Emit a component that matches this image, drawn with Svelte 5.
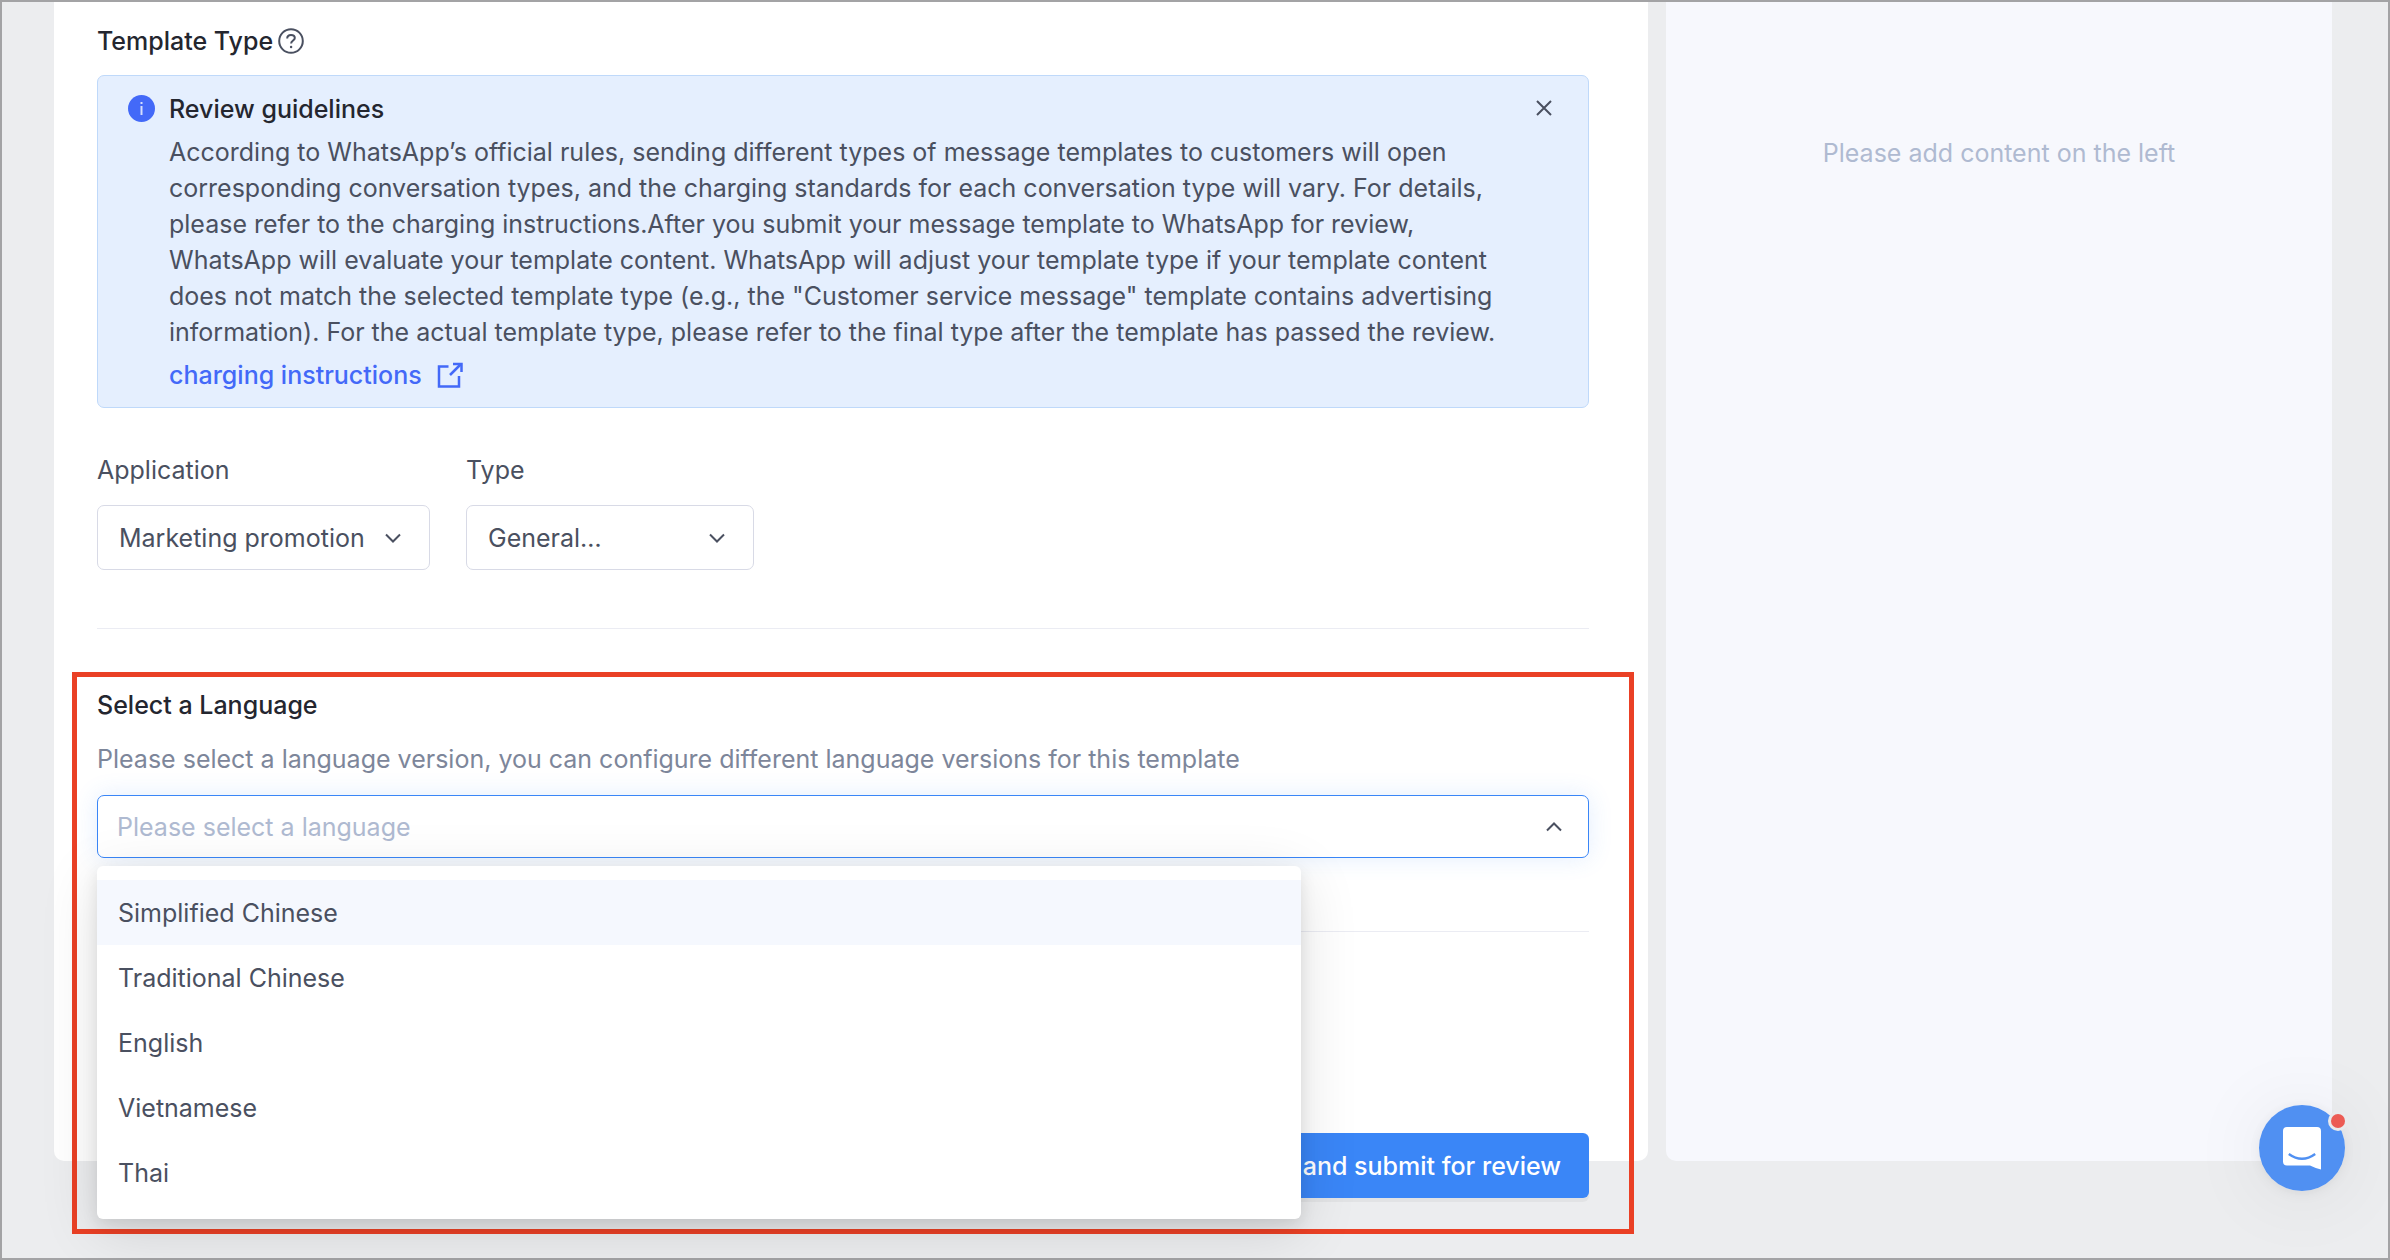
<script>
  const applications = ['Marketing promotion', 'Customer service message'];
  const types = ['General…', 'Catalog'];
  const languages = ['Simplified Chinese', 'Traditional Chinese', 'English', 'Vietnamese', 'Thai'];

  let application = $state(applications[0]);
  let type = $state(types[0]);
  let language = $state('');
  let active = $state(0);
  let open = $state(true);
  let showGuidelines = $state(true);

  function choose(name) {
    language = name;
    open = false;
  }
</script>

{#snippet chevron(up)}
  <svg class="chevron" class:up viewBox="0 0 18 18" aria-hidden="true">
    <path d="M2 5.5 L9 12.5 L16 5.5" />
  </svg>
{/snippet}

<div class="page">
  <main class="card">
    <section>
      <h2 class="heading">
        Template Type
        <svg class="help" viewBox="0 0 26 26" role="img" aria-label="Help">
          <circle cx="13" cy="13" r="11.8" />
          <path d="M9.2 10.4 C9.2 8.2 10.8 6.9 13 6.9 C15.2 6.9 16.8 8.2 16.8 10.1 C16.8 12.5 13.1 12.7 13.1 15.6" />
          <circle class="dot" cx="13.1" cy="19" r="1.2" />
        </svg>
      </h2>

      {#if showGuidelines}
        <div class="alert" role="note">
          <svg class="info" viewBox="0 0 27 27" aria-hidden="true">
            <circle cx="13.5" cy="13.5" r="13.5" />
            <path d="M13.5 11 V20" />
            <path d="M13.5 7 V9" />
          </svg>
          <div class="alert-body">
            <h3 class="heading">Review guidelines</h3>
            <p>
              According to WhatsApp’s official rules, sending different types of message templates to
              customers will open corresponding conversation types, and the charging standards for each
              conversation type will vary. For details, please refer to the charging instructions.After
              you submit your message template to WhatsApp for review, WhatsApp will evaluate your
              template content. WhatsApp will adjust your template type if your template content does
              not match the selected template type (e.g., the "Customer service message" template
              contains advertising information). For the actual template type, please refer to the
              final type after the template has passed the review.
            </p>
            <a class="more" href="#charging">
              charging instructions
              <svg viewBox="0 0 26 26" aria-hidden="true">
                <path d="M11.5 4.5 H2 V24.5 H22 V14" />
                <path d="M13 13 L24 2" />
                <path d="M16 2 H24.5 V10" />
              </svg>
            </a>
          </div>
          <button class="close" aria-label="Close" onclick={() => (showGuidelines = false)}>
            <svg viewBox="0 0 16 16" aria-hidden="true"><path d="M1 1 L15 15 M15 1 L1 15" /></svg>
          </button>
        </div>
      {/if}

      <div class="fields">
        <div class="field">
          <label for="application">Application</label>
          <div class="select">
            <select id="application" bind:value={application}>
              {#each applications as name}<option>{name}</option>{/each}
            </select>
            {@render chevron(false)}
          </div>
        </div>
        <div class="field narrow">
          <label for="type">Type</label>
          <div class="select">
            <select id="type" bind:value={type}>
              {#each types as name}<option>{name}</option>{/each}
            </select>
            {@render chevron(false)}
          </div>
        </div>
      </div>
    </section>

    <hr />

    <section class="highlight">
      <h2 class="heading"><label for="language">Select a Language</label></h2>
      <p class="hint" id="language-hint">
        Please select a language version, you can configure different language versions for this template
      </p>
      <div class="combo">
        <input
          id="language"
          role="combobox"
          readonly
          placeholder="Please select a language"
          value={language}
          aria-expanded={open}
          aria-controls="languages"
          aria-describedby="language-hint"
          onclick={() => (open = !open)}
        />
        {@render chevron(open)}
        {#if open}
          <ul id="languages" role="listbox" aria-label="Language">
            {#each languages as name, i}
              <li role="presentation">
                <button
                  role="option"
                  aria-selected={name === language}
                  class:active={i === active}
                  onmouseenter={() => (active = i)}
                  onclick={() => choose(name)}>{name}</button
                >
              </li>
            {/each}
          </ul>
        {/if}
      </div>
      <hr />
      <div class="actions">
        <button class="submit">Save and submit for review</button>
      </div>
    </section>
  </main>

  <aside class="preview">
    <p>Please add content on the left</p>
  </aside>

  <div class="chat">
    <button aria-label="Open chat">
      <svg viewBox="0 0 40 44" aria-hidden="true">
        <path
          class="bubble"
          d="M5 1 H35 Q39 1 39 5 V43.5 Q34 42.5 28 39.5 H5 Q1 39.5 1 35.5 V5 Q1 1 5 1 Z"
        />
        <path class="smile" d="M6.8 28 Q20 37.5 33.2 28" />
      </svg>
    </button>
    <span class="badge"></span>
  </div>
</div>

<style>
  :global(body) {
    margin: 0;
  }
  .page {
    box-sizing: border-box;
    position: relative;
    display: grid;
    grid-template-columns: 1594fr 666fr;
    align-items: stretch;
    gap: 18px;
    min-height: 100vh;
    padding: 0 56px 97px 52px;
    border: 2px solid #a3a3a5;
    background: #ecedef;
    font-family: Inter, 'Liberation Sans', sans-serif;
    font-size: 25px;
    line-height: 36px;
    color: #4a5060;
  }
  h2,
  h3,
  p,
  ul {
    margin: 0;
    padding: 0;
    list-style: none;
  }
  button,
  input,
  select {
    font: inherit;
    color: inherit;
    margin: 0;
    border: 0;
    box-sizing: border-box;
    cursor: pointer;
  }
  svg {
    fill: none;
    flex: none;
  }
  hr {
    margin: 0;
    border: 0;
    height: 1px;
    background: #ebecf3;
  }
  .card,
  .preview {
    border-radius: 0 0 10px 10px;
  }
  .card {
    min-width: 0;
    padding: 21px 59px 0 43px;
    background: #fff;
  }
  .heading {
    display: flex;
    align-items: center;
    gap: 5px;
    font-size: 25px;
    font-weight: 500;
    color: #24262f;
  }
  .help {
    width: 26px;
    height: 26px;
    stroke: #4a5060;
    stroke-width: 2;
  }
  .help .dot {
    fill: #4a5060;
    stroke: none;
  }
  .alert {
    display: flex;
    align-items: flex-start;
    margin-top: 16px;
    padding: 15px 36px 14px 30px;
    border: 1px solid #bfd9fa;
    border-radius: 7px;
    background: #e5effe;
  }
  .info {
    width: 27px;
    height: 27px;
    margin: 4px 14px 0 0;
    stroke: #d5defd;
    stroke-width: 2;
  }
  .info circle {
    fill: #4369f8;
    stroke: none;
  }
  .alert-body {
    flex: 1;
    min-width: 0;
  }
  .alert p {
    margin: 7px 12px 7px 0;
  }
  .more {
    display: inline-flex;
    align-items: center;
    gap: 15px;
    font-weight: 500;
    color: #4369f8;
    text-decoration: none;
    vertical-align: top;
  }
  .more svg {
    width: 26px;
    height: 26px;
    stroke: currentColor;
    stroke-width: 2.5;
  }
  .close {
    display: flex;
    margin-top: 9px;
    padding: 0;
    background: none;
  }
  .close svg {
    width: 16px;
    height: 16px;
    stroke: #4a5060;
    stroke-width: 2;
  }
  .fields {
    display: flex;
    gap: 36px;
    margin: 44px 0 58px;
  }
  .field {
    width: 333px;
  }
  .field.narrow {
    width: 288px;
  }
  .field label {
    display: block;
    margin-bottom: 17px;
  }
  .select,
  .combo {
    position: relative;
    display: grid;
    align-items: center;
  }
  .select > *,
  .combo > input,
  .combo > .chevron {
    grid-area: 1 / 1;
  }
  select {
    appearance: none;
    width: 100%;
    height: 65px;
    padding: 0 50px 0 21px;
    border: 1px solid #d8dae6;
    border-radius: 7px;
    background: #fff;
  }
  .chevron {
    justify-self: end;
    width: 18px;
    height: 18px;
    margin-right: 28px;
    stroke: #4a5060;
    stroke-width: 2;
    pointer-events: none;
  }
  .chevron.up {
    rotate: 180deg;
    margin-right: 26px;
  }
  .highlight {
    margin: 43px -45px -74px -25px;
    padding: 10px 40px 31px 20px;
    border: 5px solid #ea4025;
  }
  .hint {
    margin: 18px 0;
    color: #7d869a;
  }
  .combo {
    margin-bottom: 73px;
  }
  .combo input {
    width: 100%;
    height: 63px;
    padding: 0 60px 0 19px;
    border: 1px solid #3a86f7;
    border-radius: 7px;
    background: #fff;
    box-shadow: 0 0 24px rgba(58, 134, 247, 0.14);
    outline: none;
  }
  .combo input::placeholder {
    color: #afbad1;
    opacity: 1;
  }
  ul {
    position: absolute;
    z-index: 2;
    top: 71px;
    left: 0;
    width: 1204px;
    max-width: 100%;
    box-sizing: border-box;
    padding: 14px 0;
    border-radius: 6px;
    background: #fff;
    box-shadow: 0 12px 60px rgba(0, 0, 0, 0.12), 0 6px 16px rgba(0, 0, 0, 0.1);
  }
  li button {
    display: block;
    width: 100%;
    height: 65px;
    padding: 0 21px;
    background: none;
    text-align: left;
  }
  li .active {
    background: #f5f8fe;
  }
  .actions {
    display: flex;
    justify-content: flex-end;
    margin-top: 201px;
  }
  .submit {
    height: 65px;
    padding: 0 28px;
    border-radius: 6px;
    background: #3a86f7;
    box-shadow: 0 4px 0 rgba(0, 0, 0, 0.04);
    color: #fff;
    font-weight: 500;
  }
  .preview {
    padding-top: 133px;
    background: #f7f8fd;
    text-align: center;
    color: #afbad1;
  }
  .chat {
    position: absolute;
    right: 43px;
    bottom: 67px;
    border-radius: 50%;
    box-shadow: 0 2px 12px rgba(0, 0, 0, 0.06), 0 4px 80px rgba(0, 0, 0, 0.08);
  }
  .chat button {
    display: grid;
    place-items: center;
    width: 86px;
    height: 86px;
    padding: 0;
    border-radius: 50%;
    background: #5090f2;
  }
  .chat svg {
    width: 40px;
    height: 44px;
  }
  .bubble {
    fill: #fff;
  }
  .smile {
    stroke: #5090f2;
    stroke-width: 2.4;
  }
  .badge {
    position: absolute;
    top: 9px;
    right: 0;
    width: 14px;
    height: 14px;
    border-radius: 50%;
    background: #ec5b54;
    box-shadow: 0 0 0 3px #e9eaec;
  }
</style>
